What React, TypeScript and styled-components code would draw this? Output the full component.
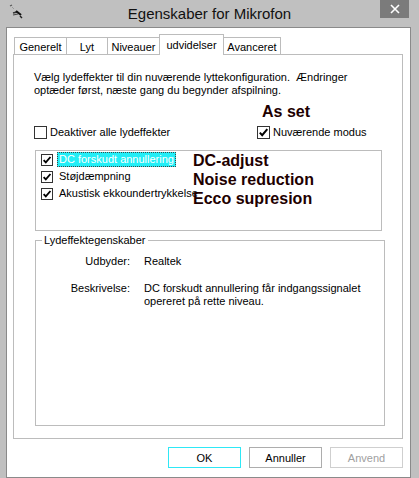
import styled, { createGlobalStyle } from "styled-components";

const GlobalStyle = createGlobalStyle`
  body {
    margin: 0;
    font-family: "Liberation Sans", Arial, sans-serif;
    font-size: 11px;
    color: #000;
  }
`;

type TabDef = { label: string; w: number; active?: boolean };

const tabs: TabDef[] = [
  { label: "Generelt", w: 53 },
  { label: "Lyt", w: 42 },
  { label: "Niveauer", w: 53 },
  { label: "udvidelser", w: 65, active: true },
  { label: "Avanceret", w: 58 },
];

const effects = [
  { label: "DC forskudt annullering", selected: true },
  { label: "Støjdæmpning" },
  { label: "Akustisk ekkoundertrykkelse" },
];

const notes = ["DC-adjust", "Noise reduction", "Ecco supresion"];

function Check({ checked, size = 13 }: { checked?: boolean; size?: number }) {
  return (
    <SBox $size={size}>
      {checked && (
        <svg width={size - 2} height={size - 2} viewBox="0 0 11 11">
          <path d="M1.8 5.6 L4.2 8.2 L9.3 2.2" fill="none" stroke="#000" strokeWidth="2" />
        </svg>
      )}
    </SBox>
  );
}

function MicIcon() {
  return (
    <svg width="16" height="16" viewBox="0 0 16 16">
      <path d="M1 2 L3 1" stroke="#555" strokeWidth="1.2" />
      <path d="M3 3 L5 5" stroke="#999" strokeWidth="1" />
      <path d="M4 9 L8 8" stroke="#333" strokeWidth="1.6" />
      <path d="M7 7 L12 11" stroke="#111" strokeWidth="2.2" />
      <path d="M4 11 L9 10" stroke="#444" strokeWidth="1.2" />
      <path d="M11 12 L13 14" stroke="#222" strokeWidth="1.4" />
    </svg>
  );
}

export default function App() {
  return (
    <>
      <GlobalStyle />
      <SWindow>
        <STitleBar>
          <SIconCell>
            <MicIcon />
          </SIconCell>
          <STitle>Egenskaber for Mikrofon</STitle>
          <SClose>
            <svg width="10" height="10" viewBox="0 0 10 10">
              <path d="M1 1 L9 9 M9 1 L1 9" stroke="#fff" strokeWidth="1.6" />
            </svg>
          </SClose>
        </STitleBar>

        <SClient>
          <STabStrip>
            {tabs.map((t) => (
              <STab key={t.label} $w={t.w} $active={t.active}>
                {t.label}
              </STab>
            ))}
          </STabStrip>

          <SPanel>
            <SIntro>
              Vælg lydeffekter til din nuværende lyttekonfiguration.&nbsp; Ændringer
              <br />
              optæder først, næste gang du begynder afspilning.
            </SIntro>

            <SOptions>
              <span />
              <SNote $inset={5}>As set</SNote>
              <SCheckLabel>
                <Check />
                Deaktiver alle lydeffekter
              </SCheckLabel>
              <SCheckLabel>
                <Check checked />
                Nuværende modus
              </SCheckLabel>
            </SOptions>

            <SList>
              {effects.map((e) => (
                <SItem key={e.label}>
                  <Check checked size={12} />
                  <SItemText $selected={e.selected}>{e.label}</SItemText>
                </SItem>
              ))}
              <SNotes>
                {notes.map((n) => (
                  <SNote key={n}>{n}</SNote>
                ))}
              </SNotes>
            </SList>

            <SGroup>
              <SLegend>Lydeffektegenskaber</SLegend>
              <SProps>
                <SPropLabel>Udbyder:</SPropLabel>
                <span>Realtek</span>
                <SPropLabel>Beskrivelse:</SPropLabel>
                <span>
                  DC forskudt annullering får indgangssignalet
                  <br />
                  opereret på rette niveau.
                </span>
              </SProps>
            </SGroup>
          </SPanel>

          <SButtons>
            <SButton $variant="default">OK</SButton>
            <SButton>Annuller</SButton>
            <SButton $variant="disabled">Anvend</SButton>
          </SButtons>
        </SClient>
      </SWindow>
    </>
  );
}

const SWindow = styled.div`
  width: 419px;
  height: 478px;
  background: #c0c0c0;
  display: flex;
  flex-direction: column;
  padding: 0 8px 0 6px;
  box-sizing: border-box;
  overflow: hidden;
`;

const STitleBar = styled.div`
  height: 27px;
  display: grid;
  grid-template-columns: 1fr auto 1fr;
  align-items: start;
  margin: 0 -8px 0 -6px;
`;

const SIconCell = styled.div`
  padding: 4px 0 0 9px;
`;

const STitle = styled.div`
  font-size: 15px;
  line-height: 15px;
  padding-top: 6px;
  color: #111;
`;

const SClose = styled.div`
  justify-self: end;
  width: 29px;
  height: 18px;
  margin-right: 10px;
  background: #7b7b7b;
  display: flex;
  align-items: center;
  justify-content: center;
`;

const SClient = styled.div`
  flex: 1;
  background: #fff;
  border: 1px solid #8a8a8a;
  display: flex;
  flex-direction: column;
`;

const STabStrip = styled.div`
  display: flex;
  align-items: flex-end;
  height: 27px;
  padding-left: 8px;
  margin-bottom: -1px;
  position: relative;
  z-index: 1;
`;

const STab = styled.div<{ $w: number; $active?: boolean }>`
  width: ${(p) => p.$w}px;
  height: ${(p) => (p.$active ? 21 : 18)}px;
  box-sizing: border-box;
  border: 1px solid #bcbcbc;
  border-bottom: ${(p) => (p.$active ? "none" : "1px solid #bcbcbc")};
  margin-left: -1px;
  background: #fff;
  display: flex;
  justify-content: center;
  padding-top: ${(p) => (p.$active ? 4 : 3)}px;
  line-height: 12px;
`;

const SPanel = styled.div`
  height: 385px;
  box-sizing: border-box;
  margin: 0 7px 0 6px;
  border: 1px solid #bcbcbc;
  padding: 16px 0 0 20px;
  display: flex;
  flex-direction: column;
`;

const SIntro = styled.p`
  margin: 0;
  line-height: 13px;
`;

const SOptions = styled.div`
  display: grid;
  grid-template-columns: 223px auto;
  row-gap: 5px;
  margin-top: 5px;
  align-items: center;
`;

const SNote = styled.div<{ $inset?: number }>`
  font-family: "Liberation Sans", Arial, sans-serif;
  font-weight: bold;
  font-size: 16px;
  line-height: 19px;
  color: #1e0000;
  margin-left: ${(p) => p.$inset ?? 0}px;
`;

const SCheckLabel = styled.label`
  display: flex;
  align-items: center;
  gap: 3px;
  line-height: 13px;
`;

const SBox = styled.span<{ $size: number }>`
  width: ${(p) => p.$size}px;
  height: ${(p) => p.$size}px;
  box-sizing: border-box;
  border: 1px solid #333;
  background: #fff;
  display: inline-flex;
  align-items: center;
  justify-content: center;
  flex-shrink: 0;
`;

const SList = styled.div`
  position: relative;
  width: 347px;
  height: 81px;
  box-sizing: border-box;
  margin: 11px 0 0 1px;
  border: 1px solid #bcbcbc;
  padding: 0 0 0 5px;
`;

const SItem = styled.div`
  height: 17px;
  display: flex;
  align-items: center;
  gap: 4px;
`;

const SItemText = styled.span<{ $selected?: boolean }>`
  padding: 1px 2px;
  line-height: 13px;
  background: ${(p) => (p.$selected ? "#22eef6" : "transparent")};
  color: ${(p) => (p.$selected ? "#fff" : "#000")};
  outline: ${(p) => (p.$selected ? "1px dotted #444" : "none")};
  outline-offset: -1px;
`;

const SNotes = styled.div`
  position: absolute;
  left: 157px;
  top: 0px;
`;

const SGroup = styled.fieldset`
  width: 350px;
  height: 192px;
  box-sizing: border-box;
  margin: 3px 0 0 1px;
  padding: 0;
  border: 1px solid #bcbcbc;
`;

const SLegend = styled.legend`
  margin-left: 6px;
  padding: 0 2px;
  line-height: 13px;
`;

const SProps = styled.div`
  display: grid;
  grid-template-columns: 94px auto;
  column-gap: 14px;
  row-gap: 14px;
  margin-top: 8px;
  line-height: 13px;
`;

const SPropLabel = styled.span`
  text-align: right;
`;

const SButtons = styled.div`
  display: flex;
  justify-content: flex-end;
  gap: 8px;
  margin: 8px 7px 0 0;
`;

const SButton = styled.button<{ $variant?: "default" | "disabled" }>`
  width: 73px;
  height: 21px;
  font-family: "Liberation Sans", Arial, sans-serif;
  font-size: 11px;
  background: #fff;
  padding: 0;
  border: 1px solid
    ${(p) =>
      p.$variant === "default" ? "#2ee8f6" : p.$variant === "disabled" ? "#cfcfcf" : "#adadad"};
  color: ${(p) => (p.$variant === "disabled" ? "#a0a0a0" : "#000")};
`;
